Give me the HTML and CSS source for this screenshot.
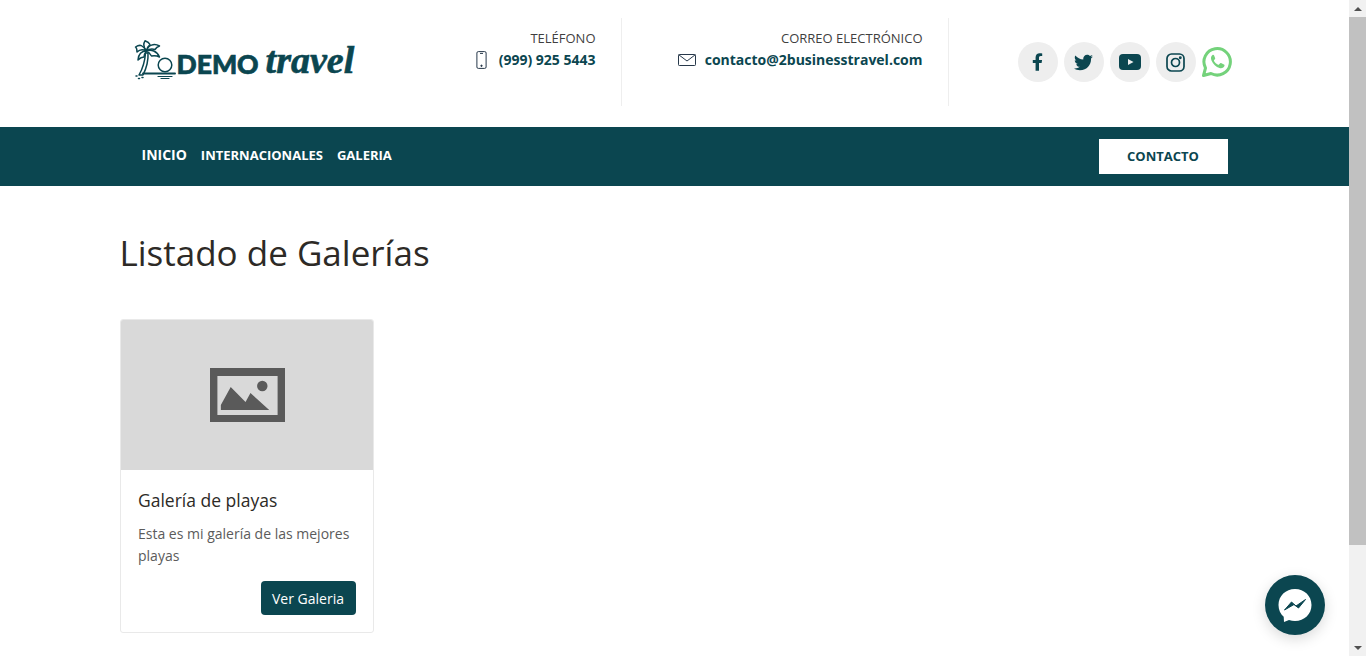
FILE: index.html
```html
<!DOCTYPE html>
<html lang="es">
<head>
    <meta charset="UTF-8">
    <meta name="viewport" content="width=device-width, initial-scale=1.0">
    <title>Demo Travel</title>
    <link rel="stylesheet" href="styles.css">
</head>
<body>
    <div class="page">
        <header class="top-header">
            <div class="container top-row">
                <a class="logo" href="#">
                    <svg class="logo-mark" width="42" height="42" viewBox="0 0 42 42" fill="none" stroke="#0b4650" stroke-width="1.5" stroke-linejoin="round" stroke-linecap="round">
                        <path d="M5 35 C9 28 11 20 11.500 13 L14 13 C14.500 21 12 29 9 35 Z"/>
                        <path d="M12.500 11 C9 5 6 4 1.500 7 C3 8 3 10 3 12 C6 9 9 9 12.500 11 Z"/>
                        <path d="M12.500 11 C10 8 9 4 11 0.800 C13 1.500 15 2.500 16 4.500 C14 6 13 8 12.500 11 Z"/>
                        <path d="M12.500 11 C14 5 20 3 25.500 6 C23 7 22 8 21 9.500 C17 8 15 9 12.500 11 Z"/>
                        <path d="M12.500 11 C17 9 23 11 25.500 17 C22.500 15.500 20 15.500 17.500 16 C16.500 14 14.500 12 12.500 11 Z"/>
                        <path d="M12.500 11 C8 11 4.500 14 4 20 C6 18 8.500 17 10 17 C10 15 11 13 12.500 11 Z"/>
                        <circle cx="31" cy="25" r="6.800"/>
                        <path d="M9 33.500 H41" stroke-width="1.900"/>
                        <path d="M24 36.500 H38 M27 38.500 H35" stroke-width="1.200"/>
                        <path d="M2 36 H3 M4.500 38.500 H5.500 M8 37.500 H9"/>
                    </svg>
                    <span class="logo-demo">DEMO</span>
                    <span class="logo-travel">travel</span>
                </a>
                <div class="contact-block contact-phone">
                    <span class="contact-label">TELÉFONO</span>
                    <span class="contact-value">
                        <svg class="phone-icon" width="11" height="18" viewBox="0 0 11 18" fill="none" stroke="#27384a" stroke-width="1">
                            <rect x="0.900" y="0.600" width="9.200" height="16.800" rx="1.400"/>
                            <path d="M4 2.400 H7"/>
                            <circle cx="5.500" cy="14.800" r="0.700" fill="#27384a"/>
                        </svg>
                        (999) 925 5443
                    </span>
                </div>
                <div class="contact-block contact-mail">
                    <span class="contact-label">CORREO ELECTRÓNICO</span>
                    <span class="contact-value">
                        <svg class="mail-icon" width="18" height="12" viewBox="0 0 18 12" fill="none" stroke="#27384a" stroke-width="1">
                            <rect x="0.500" y="0.500" width="17" height="11" rx="0.800"/>
                            <path d="M0.800 0.800 L9 7 L17.200 0.800"/>
                        </svg>
                        contacto@2businesstravel.com
                    </span>
                </div>
                <div class="socials">
                    <a class="social" href="#">
                        <svg width="11" height="18" viewBox="0 0 320 512" fill="#0b4650"><path d="M279 288l14-93h-89v-60c0-25 12-50 52-50h41V7s-37-7-72-7c-73 0-121 44-121 125v70H23v93h81v224h100V288z"/></svg>
                    </a>
                    <a class="social" href="#">
                        <svg width="19" height="19" viewBox="0 0 512 512" fill="#0b4650"><path d="M459 152c.3 4.500.3 9 .3 13.600 0 138.700-105.600 298.600-298.600 298.600-59.500 0-114.700-17.200-161.100-47.100 8.400 1 16.600 1.300 25.300 1.300 49.100 0 94.200-16.600 130.300-44.800-46.100-1-84.800-31.200-98.100-72.800 6.500 1 13 1.600 19.800 1.600 9.400 0 18.800-1.300 27.600-3.600-48.100-9.700-84.100-52-84.100-103v-1.300c14 7.800 30.200 12.700 47.400 13.300-28.300-18.800-46.800-51-46.800-87.400 0-19.500 5.200-37.400 14.300-53 51.700 63.700 129.300 105.300 216.400 109.800-1.600-7.800-2.600-15.900-2.600-24 0-57.800 46.800-104.900 104.900-104.900 30.200 0 57.500 12.700 76.700 33.100 23.700-4.500 46.500-13.300 66.600-25.300-7.800 24-24.400 44.200-46.100 57.200 21.100-2.300 41.600-8.100 60.400-16.200-14.300 20.800-32.200 39.300-52.600 54.200z"/></svg>
                    </a>
                    <a class="social" href="#">
                        <svg width="22" height="16" viewBox="0 0 22 16"><rect width="22" height="16" rx="4" fill="#0b4650"/><path d="M9 5 L14.500 8 L9 11 Z" fill="#eeeeee"/></svg>
                    </a>
                    <a class="social" href="#">
                        <svg width="19" height="19" viewBox="0 0 19 19" fill="none" stroke="#0b4650" stroke-width="1.700"><rect x="1" y="1" width="17" height="17" rx="4.500"/><circle cx="9.500" cy="9.500" r="4"/><circle cx="14.300" cy="4.700" r="0.600" fill="#0b4650"/></svg>
                    </a>
                    <a class="whatsapp" href="#">
                        <svg width="30" height="30" viewBox="0 0 30 30">
                            <path d="M1.500 28.500 L3.500 21 A13.200 13.200 0 1 1 9 26.500 Z" fill="none" stroke="#74d27b" stroke-width="3" stroke-linejoin="round"/>
                            <path d="M10.500 8 C9 9 8.500 11 9.500 13.500 C11 17 14 20 17.500 21 C20 21.700 22 20.500 22.500 18.800 C22.600 18 22.500 17.700 22 17.500 L19 16 C18.500 15.800 18.200 16 17.900 16.400 L17 17.500 C16.600 17.900 16.200 17.800 15.700 17.500 C14 16.700 12.800 15.300 12 14 C11.800 13.500 11.900 13.200 12.200 12.900 L13 12 C13.300 11.600 13.300 11.300 13.100 10.900 L12 8.300 C11.700 7.700 11 7.600 10.500 8 Z" fill="#74d27b"/>
                        </svg>
                    </a>
                </div>
            </div>
        </header>

        <nav class="main-nav">
            <div class="container nav-row">
                <ul class="nav-links">
                    <li><a class="nav-active" href="#">INICIO</a></li>
                    <li><a href="#">INTERNACIONALES</a></li>
                    <li><a href="#">GALERIA</a></li>
                </ul>
                <a class="contact-button" href="#">CONTACTO</a>
            </div>
        </nav>

        <main class="container content">
            <h1 class="page-title">Listado de Galerías</h1>
            <div class="gallery-grid">
                <article class="gallery-card">
                    <div class="card-thumb">
                        <svg class="thumb-icon" width="75" height="54" viewBox="0 0 76 54" preserveAspectRatio="none">
                            <path fill-rule="evenodd" d="M0 0 H76 V54 H0 Z M7.500 8 V47 H68.500 V8 Z" fill="#5a5a5a"/>
                            <circle cx="53" cy="18" r="5.300" fill="#5a5a5a"/>
                            <path d="M11 42 L11 37 L21 19 L36 34 L41 25 L60 42 Z" fill="#5a5a5a"/>
                        </svg>
                    </div>
                    <div class="card-body">
                        <h2 class="card-title">Galería de playas</h2>
                        <p class="card-text">Esta es mi galería de las mejores playas</p>
                        <div class="card-actions">
                            <a class="card-button" href="#">Ver Galeria</a>
                        </div>
                    </div>
                </article>
            </div>
        </main>
    </div>

    <div class="scrollbar">
        <span class="scroll-arrow scroll-up"></span>
        <div class="scroll-track"><div class="scroll-thumb"></div></div>
        <span class="scroll-arrow scroll-down"></span>
    </div>

    <a class="messenger-button" href="#">
        <svg width="36" height="36" viewBox="0 0 36 36">
            <path d="M18 2 C8.700 2 1.500 8.800 1.500 18 C1.500 22.800 3.500 27 6.700 29.800 L7 35 L12 32.900 C14 33.600 16 34 18 34 C27.300 34 34.500 27.200 34.500 18 C34.500 8.800 27.300 2 18 2 Z" fill="#ffffff"/>
            <path d="M7.500 23 L14.500 15 L19 19 L28.500 12.500 L21.500 21 L17 17.500 Z" fill="#0b4650" stroke="#0b4650" stroke-width="1" stroke-linejoin="round"/>
        </svg>
    </a>
</body>
</html>
```
FILE: styles.css
```css
html, body {
    height: 100%;
    overflow: hidden;
}
body {
    display: flex;
    margin: 0;
    font-family: "Open Sans", Arial, sans-serif;
    color: #2d2a26;
    background-color: #ffffff;
}
a {
    text-decoration: none;
}
.page {
    flex: 1;
    min-width: 0;
}
.container {
    width: 1140px;
    margin: 0 auto;
    padding: 0 15px;
    box-sizing: border-box;
}

/* the window's scrollbar */
.scrollbar {
    display: flex;
    flex-direction: column;
    flex: none;
    width: 17px;
    background-color: #f1f1f1;
}
.scroll-arrow {
    display: flex;
    flex: none;
    align-items: center;
    justify-content: center;
    height: 17px;
}
.scroll-up::before {
    content: "";
    border-left: 4px solid transparent;
    border-right: 4px solid transparent;
    border-bottom: 4px solid #505050;
}
.scroll-down::before {
    content: "";
    border-left: 4px solid transparent;
    border-right: 4px solid transparent;
    border-top: 4px solid #505050;
}
.scroll-track {
    flex: 1;
}
.scroll-thumb {
    height: 528px;
    background-color: #c1c1c1;
}

/* header */
.top-header {
    height: 127px;
}
.top-row {
    display: flex;
    height: 100%;
    align-items: flex-start;
}
.logo {
    display: flex;
    flex: none;
    align-items: center;
    width: 300px;
    height: 42px;
    margin-top: 40px;
    margin-left: 14px;
    color: #0b4650;
}
.logo-mark {
    flex: none;
}
.logo-demo {
    font-family: "Lato", sans-serif;
    font-weight: 900;
    font-size: 26.500px;
    line-height: 32px;
    margin-left: 1px;
    margin-top: 5px;
    -webkit-text-stroke: 0.7px #0b4650;
}
.logo-travel {
    font-family: "Liberation Serif", serif;
    font-style: italic;
    font-weight: 700;
    font-size: 38px;
    line-height: 44px;
    letter-spacing: 0;
    margin-left: 7px;
    margin-top: -2px;
    -webkit-text-stroke: 0.6px #0b4650;
}
.contact-block {
    display: flex;
    flex: none;
    flex-direction: column;
    align-items: flex-end;
    height: 88px;
    margin-top: 18px;
    padding: 11px 25px 0 0;
    box-sizing: border-box;
    border-right: 1px solid #eeeeee;
}
.contact-phone {
    width: 168px;
    margin-left: 20px;
}
.contact-mail {
    width: 327px;
}
.contact-label {
    font-size: 13px;
    line-height: 18px;
    color: #3f3f3f;
}
.contact-value {
    display: flex;
    align-items: center;
    font-size: 14px;
    font-weight: 700;
    line-height: 22px;
    color: #0b4650;
    margin-top: 2px;
}
.phone-icon {
    margin-right: 12px;
}
.mail-icon {
    margin-right: 9px;
}
.socials {
    display: flex;
    align-items: center;
    gap: 6px;
    margin-top: 42px;
    margin-left: 69px;
}
.social {
    display: flex;
    align-items: center;
    justify-content: center;
    width: 40px;
    height: 40px;
    border-radius: 50%;
    background-color: #eeeeee;
}
.whatsapp {
    display: flex;
}

/* nav */
.main-nav {
    height: 59px;
    background-color: #0b4650;
}
.nav-row {
    display: flex;
    align-items: center;
    justify-content: space-between;
    height: 100%;
    padding-right: 17px;
}
.nav-links {
    display: flex;
    align-items: center;
    gap: 14px;
    list-style: none;
    margin: 0 0 6px 22px;
    padding: 0;
}
.nav-links a {
    color: #ffffff;
    font-size: 13px;
    font-weight: 700;
}
.nav-links .nav-active {
    font-size: 14px;
}
.contact-button {
    display: flex;
    align-items: center;
    justify-content: center;
    width: 129px;
    height: 35px;
    padding-bottom: 2px;
    box-sizing: border-box;
    background-color: #ffffff;
    color: #0b4650;
    font-size: 13px;
    font-weight: 700;
}

/* content */
.content {
    padding-top: 44px;
}
.page-title {
    margin: 0;
    font-size: 35px;
    font-weight: 400;
    line-height: 45px;
    color: #2d2a26;
}
.gallery-grid {
    display: flex;
    margin-top: 44px;
}
.gallery-card {
    width: 254px;
    height: 314px;
    box-sizing: border-box;
    border: 1px solid #e9e9e9;
    border-radius: 3px;
    overflow: hidden;
}
.card-thumb {
    display: flex;
    align-items: center;
    justify-content: center;
    height: 150px;
    background-color: #d9d9d9;
}
.thumb-icon {
    margin-left: 1px;
}
.card-body {
    padding: 17px 17px 0 17.500px;
}
.card-title {
    margin: 0;
    font-size: 17.500px;
    font-weight: 400;
    line-height: 27px;
    color: #2d2a26;
}
.card-text {
    margin: 9px 0 0;
    font-size: 14px;
    line-height: 22px;
    color: #5b5b5b;
}
.card-actions {
    display: flex;
    justify-content: flex-end;
    margin-top: 14px;
}
.card-button {
    display: flex;
    align-items: center;
    justify-content: center;
    width: 95px;
    height: 34px;
    border-radius: 4px;
    background-color: #0b4650;
    color: #ffffff;
    font-size: 14px;
}

/* floating chat button */
.messenger-button {
    position: fixed;
    right: 41px;
    bottom: 21px;
    display: flex;
    align-items: center;
    justify-content: center;
    width: 60px;
    height: 60px;
    border-radius: 50%;
    background-color: #0b4650;
    box-shadow: 0 4px 14px rgba(0, 0, 0, 0.15);
}
```
